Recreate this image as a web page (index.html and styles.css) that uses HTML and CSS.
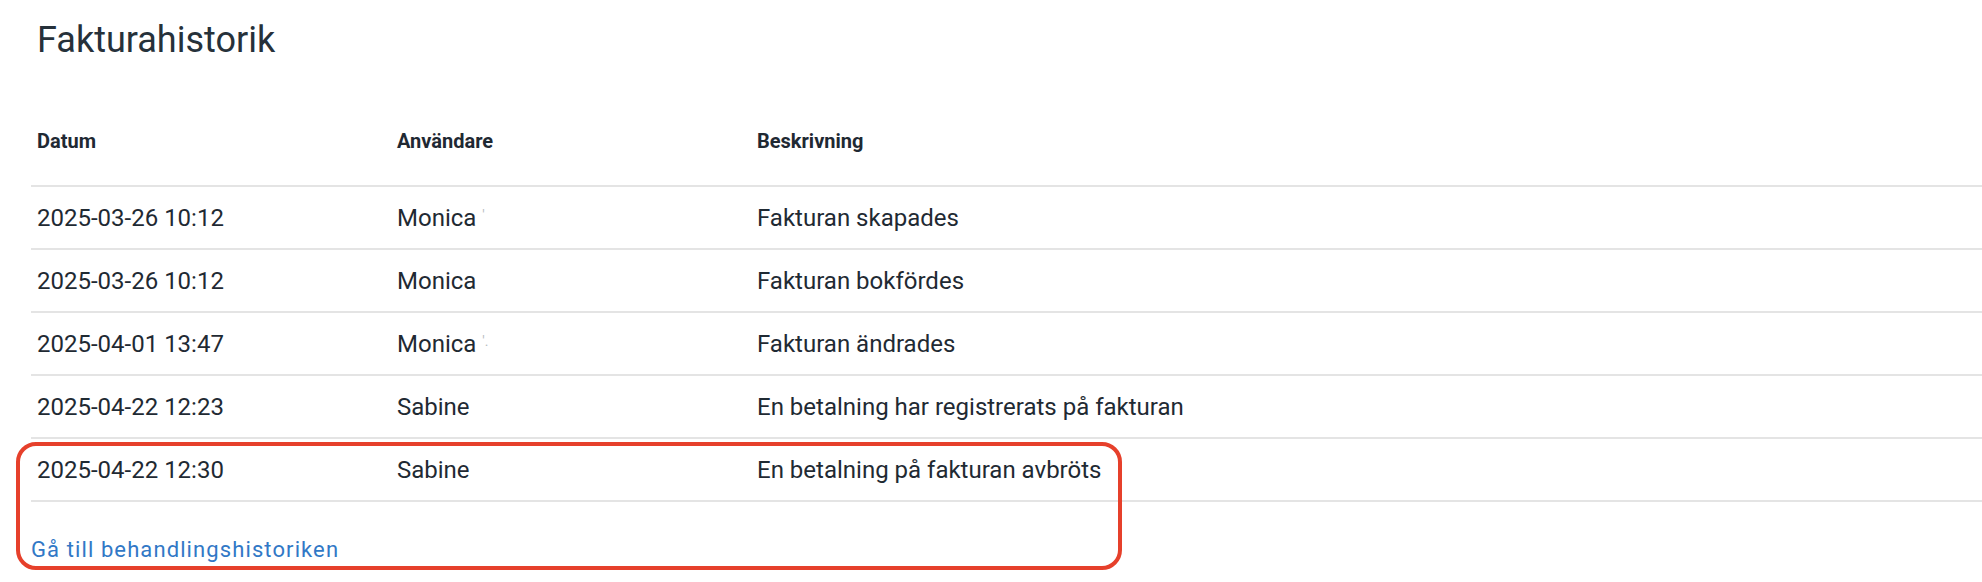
FILE: index.html
```html
<!DOCTYPE html>
<html lang="sv">
<head>
<meta charset="utf-8">
<title>Fakturahistorik</title>
<link rel="stylesheet" href="styles.css">
</head>
<body>
<main class="page">
  <h1 class="title">Fakturahistorik</h1>
  <table class="history">
    <thead>
      <tr>
        <th class="col-date">Datum</th>
        <th class="col-user">Användare</th>
        <th class="col-desc">Beskrivning</th>
      </tr>
    </thead>
    <tbody>
      <tr><td>2025-03-26 10:12</td><td>Monica <span class="redacted">'</span></td><td>Fakturan skapades</td></tr>
      <tr><td>2025-03-26 10:12</td><td>Monica</td><td>Fakturan bokfördes</td></tr>
      <tr><td>2025-04-01 13:47</td><td>Monica <span class="redacted">'.</span></td><td>Fakturan ändrades</td></tr>
      <tr><td>2025-04-22 12:23</td><td>Sabine</td><td>En betalning har registrerats på fakturan</td></tr>
      <tr><td>2025-04-22 12:30</td><td>Sabine</td><td>En betalning på fakturan avbröts</td></tr>
    </tbody>
  </table>
  <a class="history-link" href="#">Gå till behandlingshistoriken</a>
  <div class="highlight"></div>
</main>
</body>
</html>
```
FILE: styles.css
```css
html, body {
  margin: 0;
  padding: 0;
  background: #ffffff;
}
body {
  font-family: Roboto, "Liberation Sans", sans-serif;
  color: #1f2a33;
}
.page {
  position: relative;
  width: 1982px;
  height: 582px;
}
.title {
  margin: 0;
  padding: 18px 0 0 37px;
  font-size: 36px;
  line-height: 44px;
  font-weight: 400;
  color: #26313a;
}
.history {
  margin: 67px 0 0 31px;
  width: 1951px;
  border-collapse: collapse;
  table-layout: fixed;
}
.history th,
.history td {
  text-align: left;
  padding-left: 6px;
  border-bottom: 2px solid #e4e4e4;
}
.history th {
  font-size: 20px;
  line-height: 24px;
  font-weight: 700;
  padding-top: 0;
  padding-bottom: 32px;
  color: #1f2933;
}
.col-date { width: 353px; }
.col-user { width: 353px; }
.history td {
  font-size: 24px;
  line-height: 28px;
  padding-top: 17px;
  padding-bottom: 16px;
  color: #1f2a33;
  white-space: nowrap;
}
.redacted {
  color: #b8bcc0;
  font-size: 14px;
  line-height: 0;
  vertical-align: 6px;
}
.history-link {
  display: block;
  margin: 35px 0 0 31px;
  font-size: 22px;
  line-height: 26px;
  letter-spacing: 1.1px;
  color: #3178c6;
  text-decoration: none;
}
.highlight {
  position: absolute;
  left: 16px;
  top: 442px;
  width: 1098px;
  height: 120px;
  border: 4px solid #e6402b;
  border-radius: 20px;
}
```
